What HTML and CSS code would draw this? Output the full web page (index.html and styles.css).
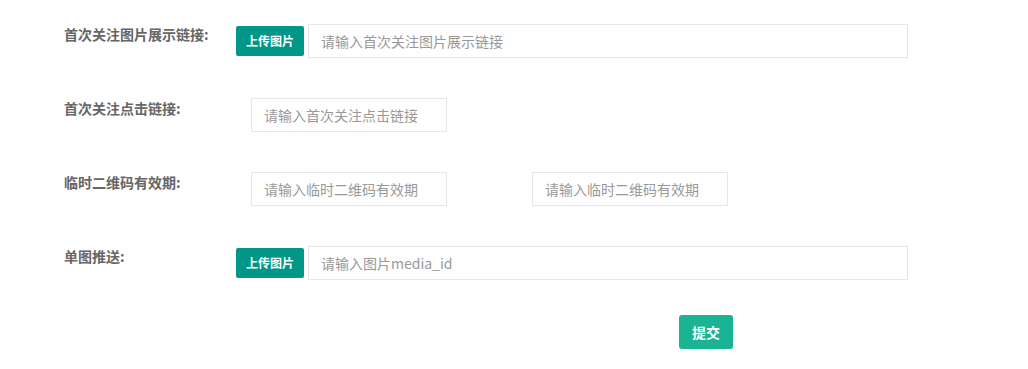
FILE: index.html
```html
<!DOCTYPE html>
<html>
	<head>
		<meta charset="utf-8">
		<title>设置</title>
		<link rel="stylesheet" href="styles.css">
	</head>
	<body>
		<form class="form">
			<div class="row">
				<label class="label">首次关注图片展示链接:</label>
				<div class="field">
					<span class="upBtn">上传图片</span>
					<input class="input wide" placeholder="请输入首次关注图片展示链接">
				</div>
			</div>
			<div class="row">
				<label class="label">首次关注点击链接:</label>
				<div class="field inset">
					<input class="input short" placeholder="请输入首次关注点击链接">
				</div>
			</div>
			<div class="row">
				<label class="label">临时二维码有效期:</label>
				<div class="field inset pair">
					<input class="input short" placeholder="请输入临时二维码有效期">
					<input class="input short" placeholder="请输入临时二维码有效期">
				</div>
			</div>
			<div class="row">
				<label class="label">单图推送:</label>
				<div class="field">
					<span class="upBtn">上传图片</span>
					<input class="input wide" placeholder="请输入图片media_id">
				</div>
			</div>
			<div class="submitRow">
				<span class="subBtn">提交</span>
			</div>
		</form>
	</body>
</html>
```

FILE: styles.css
```css
body{
	margin: 0;
	padding: 0;
	font-family: "Noto Sans CJK SC", "Liberation Sans", sans-serif;
	background: #ffffff;
}
.form{
	padding: 24px 0 0 64px;
}
.row{
	display: flex;
	align-items: flex-start;
	margin-bottom: 40px;
	height: 34px;
}
.label{
	width: 172px;
	font-size: 14px;
	font-weight: bold;
	color: #666666;
	line-height: 20px;
	margin-top: 0;
}
.field{
	display: flex;
	align-items: center;
	height: 34px;
}
.field.inset{
	padding-left: 15px;
}
.pair{
	gap: 85px;
}
.upBtn{
	width: 68px;
	height: 30px;
	line-height: 30px;
	text-align: center;
	background-color: #009688;
	color: #ffffff;
	font-size: 12px;
	font-weight: bold;
	border-radius: 2px;
	margin-right: 4px;
}
.input{
	box-sizing: border-box;
	height: 34px;
	border: 1px solid #e6e6e6;
	padding: 0 12px;
	font-size: 14px;
	font-family: "Noto Sans CJK SC", "Liberation Sans", sans-serif;
	color: #333333;
	outline: none;
	margin: 0;
}
.input::placeholder{
	color: #999999;
}
.wide{
	width: 600px;
}
.short{
	width: 196px;
}
.submitRow{
	padding-left: 615px;
	margin-top: -5px;
}
.subBtn{
	display: inline-block;
	width: 54px;
	height: 34px;
	line-height: 34px;
	text-align: center;
	background-color: #1ab394;
	color: #ffffff;
	font-size: 14px;
	font-weight: bold;
	border-radius: 3px;
}
```
